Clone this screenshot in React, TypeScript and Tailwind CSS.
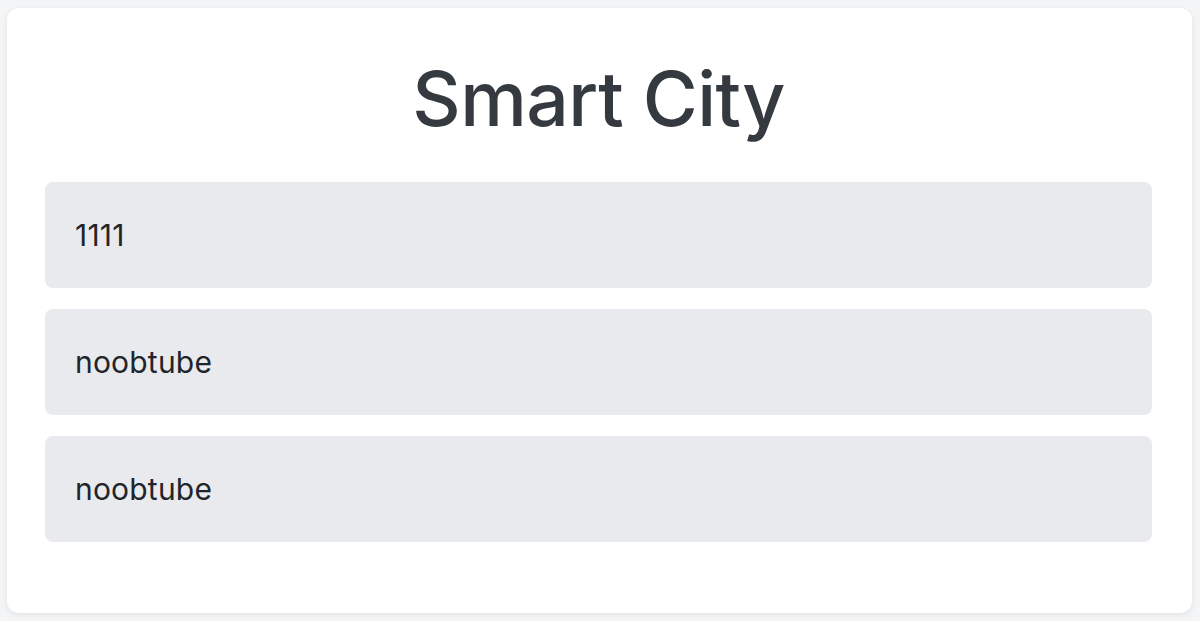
export default function App() {
  const items = ['1111', 'noobtube', 'noobtube'];

  return (
    <div className="min-h-[621px] bg-[#f4f5f7] pl-[7px] pr-[8px] pt-[8px] pb-[9px]" style={{ fontFamily: 'Inter, "Noto Sans", sans-serif' }}>
      <div className="rounded-[12px] bg-white pl-[38px] pr-[40px] pt-[46px] pb-[71px] shadow-[0_2px_6px_rgba(0,0,0,0.08)]">
        <h1 className="text-center text-[75px] font-medium leading-[90px] tracking-[-0.5px] text-[#343a40]">
          Smart City
        </h1>
        <div className="mt-[38px] flex flex-col gap-[21px]">
          {items.map((item, i) => (
            <div
              key={i}
              className="flex h-[106px] items-center rounded-[8px] bg-[#e9eaee] px-[30px] text-[30px] tracking-[0.2px] text-[#212529]"
            >
              {item}
            </div>
          ))}
        </div>
      </div>
    </div>
  );
}
